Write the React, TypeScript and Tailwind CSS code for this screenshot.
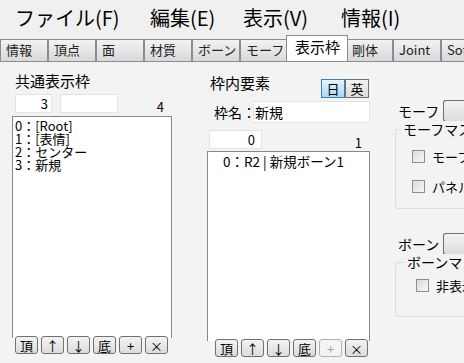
const jp = { fontFamily: '"Noto Sans CJK JP", "Noto Sans", sans-serif' };

function Tab({ label, w, active }: { label: string; w: string; active?: boolean }) {
  if (active) {
    return (
      <div
        className={`${w} h-[26px] shrink-0 -mx-[2px] z-10 relative bg-white border border-[#898c95] border-b-0 px-[8px] pt-[1px] text-[15px] leading-[20px] text-black`}
      >
        {label}
      </div>
    );
  }
  return (
    <div
      className={`${w} h-[22px] shrink-0 overflow-hidden border border-[#898c95] border-b-0 bg-gradient-to-b from-[#f2f2f2] to-[#d9d9d9] px-[5px] text-[13px] leading-[20px] text-[#222]`}
    >
      {label}
    </div>
  );
}

function Btn({ label, disabled }: { label: string; disabled?: boolean }) {
  return (
    <div
      className={
        'w-[23px] h-[18px] shrink-0 flex items-center justify-center rounded-[3px] border text-[13px] leading-none ' +
        (disabled
          ? 'border-[#adb2b5] bg-[#f4f4f4] text-[#a0a0a0]'
          : 'border-[#707070] bg-gradient-to-b from-[#f3f3f3] to-[#dcdcdc] text-black')
      }
    >
      {label}
    </div>
  );
}

function Check({ label }: { label: string }) {
  return (
    <div className="flex items-center gap-[7px] text-[13px] leading-none">
      <div className="w-[13px] h-[13px] border border-[#8f8f8f] bg-gradient-to-br from-[#dcdcdc] to-[#f6f6f6] shrink-0" />
      <span className="whitespace-nowrap">{label}</span>
    </div>
  );
}

export default function App() {
  return (
    <div className="w-[464px] h-[363px] flex flex-col bg-[#f0f0f0] overflow-hidden text-black" style={jp}>
      {/* menu */}
      <div className="h-[35px] shrink-0 flex items-center pl-[15px] text-[20px] whitespace-nowrap">
        <span className="w-[135px] shrink-0">ファイル(F)</span>
        <span className="w-[93px] shrink-0">編集(E)</span>
        <span className="w-[98px] shrink-0">表示(V)</span>
        <span className="shrink-0">情報(I)</span>
      </div>

      {/* tabs */}
      <div className="h-[26px] shrink-0 flex items-end whitespace-nowrap">
        <Tab label="情報" w="w-[48px]" />
        <Tab label="頂点" w="w-[48px]" />
        <Tab label="面" w="w-[48px]" />
        <Tab label="材質" w="w-[48px]" />
        <Tab label="ボーン" w="w-[48px]" />
        <Tab label="モーフ" w="w-[48px]" />
        <Tab label="表示枠" w="w-[62px]" active />
        <Tab label="剛体" w="w-[47px]" />
        <Tab label="Joint" w="w-[48px]" />
        <Tab label="SoftBody" w="w-[70px]" />
      </div>

      {/* page */}
      <div className="flex-1 min-h-0 border-t border-[#898c95] bg-[#f3f3f3] flex pl-[12px]">
        {/* left column */}
        <div className="w-[160px] shrink-0 flex flex-col pt-[10px]">
          <div className="pl-[3px] text-[15px] leading-[18px]">共通表示枠</div>
          <div className="flex items-end mt-[4px] pl-[3px]">
            <div className="w-[37px] h-[19px] bg-white border border-[#e3e3e3] text-right pr-[3px] text-[13px] leading-[17px]">3</div>
            <div className="w-[58px] h-[19px] bg-white border border-[#e3e3e3] ml-[8px]" />
            <div className="flex-1 text-right pr-[8px] text-[13px] leading-[13px]">4</div>
          </div>
          <div className="mt-[3px] h-[222px] shrink-0 bg-white border border-[#828790] border-b-0 pl-[2px] pt-[2px] text-[13px] leading-[13px]">
            <div>0：[Root]</div>
            <div>1：[表情]</div>
            <div>2：センター</div>
            <div>3：新規</div>
          </div>
          <div className="flex gap-[3px] pl-[3px] -mt-[2px]">
            <Btn label="頂" />
            <Btn label="↑" />
            <Btn label="↓" />
            <Btn label="底" />
            <Btn label="+" />
            <Btn label="×" />
          </div>
        </div>

        {/* middle column */}
        <div className="w-[163px] shrink-0 ml-[35px] flex flex-col pt-[12px]">
          <div className="flex items-start">
            <div className="pl-[3px] text-[15px] leading-[18px] flex-1">枠内要素</div>
            <div className="flex mt-[5px] mr-[1px]">
              <div className="w-[24px] h-[19px] border border-[#3c7fb1] bg-gradient-to-b from-[#e5f4fc] to-[#a7d9f5] text-[13px] leading-[17px] text-center">日</div>
              <div className="w-[24px] h-[19px] border border-[#707070] bg-gradient-to-b from-[#f3f3f3] to-[#dcdcdc] text-[13px] leading-[17px] text-center">英</div>
            </div>
          </div>
          <div className="flex items-center mt-[3px]">
            <div className="pl-[7px] w-[46px] shrink-0 text-[14px] whitespace-nowrap">枠名：</div>
            <div className="flex-1 h-[22px] bg-white border border-[#e3e3e3] text-[14px] leading-[20px] pl-[1px]">新規</div>
          </div>
          <div className="flex items-end mt-[7px] pl-[2px]">
            <div className="w-[53px] h-[19px] bg-white border border-[#e3e3e3] text-right pr-[6px] text-[13px] leading-[17px]">0</div>
            <div className="flex-1 text-right pr-[8px] text-[13px] leading-[13px]">1</div>
          </div>
          <div className="mt-[2px] h-[190px] shrink-0 bg-white border border-[#828790] border-b-0 pl-[15px] pt-[3px] text-[13.5px] leading-[13px] whitespace-nowrap">
            0：R2 | 新規ボーン1
          </div>
          <div className="flex gap-[3px] pl-[8px] -mt-[2px]">
            <Btn label="頂" />
            <Btn label="↑" />
            <Btn label="↓" />
            <Btn label="底" />
            <Btn label="+" disabled />
            <Btn label="×" />
          </div>
        </div>

        {/* right column */}
        <div className="ml-[25px] w-[80px] shrink-0 flex flex-col pt-[38px] whitespace-nowrap">
          <div className="flex items-center pl-[3px]">
            <span className="text-[14px] w-[45px] shrink-0">モーフ：</span>
            <div className="w-[40px] h-[22px] shrink-0 rounded-l-[3px] border border-[#707070] border-r-0 bg-gradient-to-b from-[#f3f3f3] to-[#dcdcdc]" />
          </div>
          <div className="mt-[7px] h-[80px] border border-[#d5dfe5] border-r-0 rounded-l-[3px] relative pl-[16px] pt-[20px] flex flex-col gap-[17px]">
            <div className="absolute -top-[9px] left-[5px] bg-[#f3f3f3] px-[2px] text-[14px] leading-[16px]">モーフマスク</div>
            <Check label="モーフ" />
            <Check label="パネル" />
          </div>
          <div className="flex items-center pl-[3px] mt-[24px]">
            <span className="text-[14px] w-[45px] shrink-0">ボーン：</span>
            <div className="w-[40px] h-[22px] shrink-0 rounded-l-[3px] border border-[#707070] border-r-0 bg-gradient-to-b from-[#f3f3f3] to-[#dcdcdc]" />
          </div>
          <div className="mt-[7px] h-[55px] border border-[#d5dfe5] border-r-0 rounded-l-[3px] relative pl-[20px] pt-[16px]">
            <div className="absolute -top-[9px] left-[9px] bg-[#f3f3f3] px-[2px] text-[14px] leading-[16px]">ボーンマスク</div>
            <Check label="非表示" />
          </div>
        </div>
      </div>
    </div>
  );
}
